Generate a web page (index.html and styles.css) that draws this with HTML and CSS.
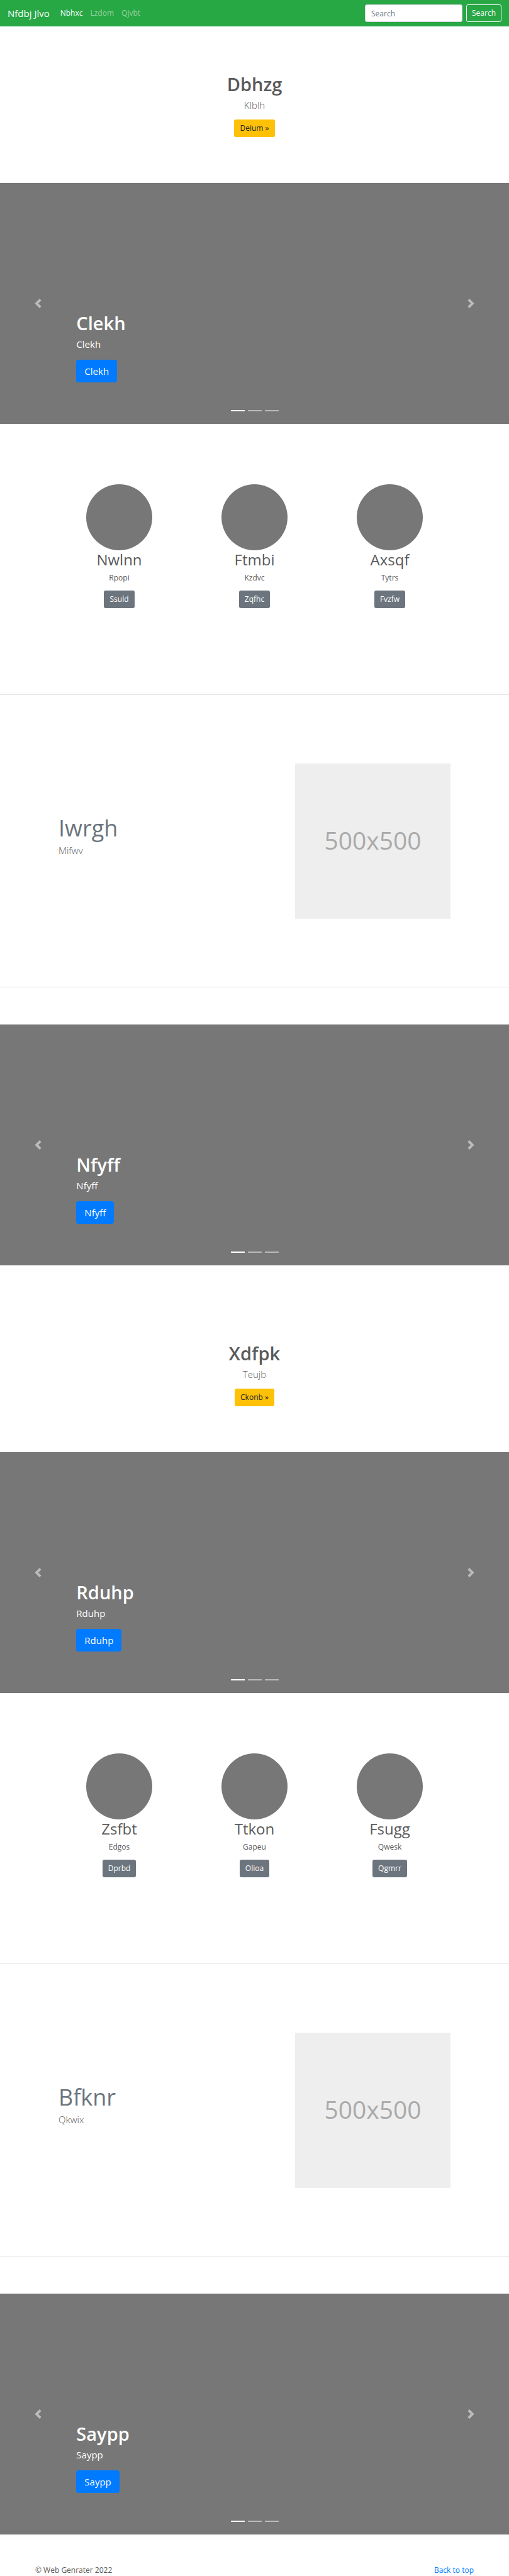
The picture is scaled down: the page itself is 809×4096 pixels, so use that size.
FILE: index.html
```html
<!DOCTYPE html>
<html lang="en">
<head>
<meta charset="utf-8">
<meta name="viewport" content="width=device-width, initial-scale=1">
<title>Nfdbj Jlvo</title>
<link rel="stylesheet" href="styles.css">
</head>
<body>
<header class="navbar" id="top">
  <a class="brand" href="#">Nfdbj Jlvo</a>
  <nav class="nav">
    <a class="nav-link active" href="#">Nbhxc</a>
    <a class="nav-link" href="#">Lzdom</a>
    <a class="nav-link" href="#">Qjvbt</a>
  </nav>
  <form class="search">
    <input class="search-input" type="text" placeholder="Search" aria-label="Search">
    <button class="btn btn-outline" type="submit">Search</button>
  </form>
</header>
<main>
  <section class="hero">
    <h1 class="title">Dbhzg</h1>
    <p class="lead">Klblh</p>
    <a class="btn btn-warning" href="#">Deium »</a>
  </section>

  <section class="carousel" aria-label="Clekh">
    <h2 class="title">Clekh</h2>
    <p class="caption">Clekh</p>
    <a class="btn btn-primary" href="#">Clekh</a>
    <button class="control prev" type="button" aria-label="Previous"><svg class="chevron" viewBox="0 0 8 8"><path d="M5.25 0l-4 4 4 4 1.5-1.5-2.5-2.5 2.5-2.5-1.5-1.5z"/></svg></button>
    <button class="control next" type="button" aria-label="Next"><svg class="chevron" viewBox="0 0 8 8"><path d="M2.75 0l-1.5 1.5 2.5 2.5-2.5 2.5 1.5 1.5 4-4-4-4z"/></svg></button>
    <div class="indicators"><button class="dot current" type="button" aria-label="Slide 1"></button><button class="dot" type="button" aria-label="Slide 2"></button><button class="dot" type="button" aria-label="Slide 3"></button></div>
  </section>

  <section class="marketing">
    <article class="card"><div class="avatar"></div><h2 class="card-title">Nwlnn</h2><p class="card-text">Rpopi</p><a class="btn btn-secondary" href="#">Ssuld</a></article>
    <article class="card"><div class="avatar"></div><h2 class="card-title">Ftmbi</h2><p class="card-text">Kzdvc</p><a class="btn btn-secondary" href="#">Zqfhc</a></article>
    <article class="card"><div class="avatar"></div><h2 class="card-title">Axsqf</h2><p class="card-text">Tytrs</p><a class="btn btn-secondary" href="#">Fvzfw</a></article>
  </section>

  <hr class="divider">
  <section class="featurette">
    <div class="feature-copy">
      <h2 class="feature-title">Iwrgh</h2>
      <p class="lead">Mifwv</p>
    </div>
    <div class="placeholder">500x500</div>
  </section>
  <hr class="divider">

  <section class="carousel after-divider" aria-label="Nfyff">
    <h2 class="title">Nfyff</h2>
    <p class="caption">Nfyff</p>
    <a class="btn btn-primary" href="#">Nfyff</a>
    <button class="control prev" type="button" aria-label="Previous"><svg class="chevron" viewBox="0 0 8 8"><path d="M5.25 0l-4 4 4 4 1.5-1.5-2.5-2.5 2.5-2.5-1.5-1.5z"/></svg></button>
    <button class="control next" type="button" aria-label="Next"><svg class="chevron" viewBox="0 0 8 8"><path d="M2.75 0l-1.5 1.5 2.5 2.5-2.5 2.5 1.5 1.5 4-4-4-4z"/></svg></button>
    <div class="indicators"><button class="dot current" type="button" aria-label="Slide 1"></button><button class="dot" type="button" aria-label="Slide 2"></button><button class="dot" type="button" aria-label="Slide 3"></button></div>
  </section>

  <section class="hero hero-spaced">
    <h2 class="title">Xdfpk</h2>
    <p class="lead">Teujb</p>
    <a class="btn btn-warning" href="#">Ckonb »</a>
  </section>

  <section class="carousel" aria-label="Rduhp">
    <h2 class="title">Rduhp</h2>
    <p class="caption">Rduhp</p>
    <a class="btn btn-primary" href="#">Rduhp</a>
    <button class="control prev" type="button" aria-label="Previous"><svg class="chevron" viewBox="0 0 8 8"><path d="M5.25 0l-4 4 4 4 1.5-1.5-2.5-2.5 2.5-2.5-1.5-1.5z"/></svg></button>
    <button class="control next" type="button" aria-label="Next"><svg class="chevron" viewBox="0 0 8 8"><path d="M2.75 0l-1.5 1.5 2.5 2.5-2.5 2.5 1.5 1.5 4-4-4-4z"/></svg></button>
    <div class="indicators"><button class="dot current" type="button" aria-label="Slide 1"></button><button class="dot" type="button" aria-label="Slide 2"></button><button class="dot" type="button" aria-label="Slide 3"></button></div>
  </section>

  <section class="marketing">
    <article class="card"><div class="avatar"></div><h2 class="card-title">Zsfbt</h2><p class="card-text">Edgos</p><a class="btn btn-secondary" href="#">Dprbd</a></article>
    <article class="card"><div class="avatar"></div><h2 class="card-title">Ttkon</h2><p class="card-text">Gapeu</p><a class="btn btn-secondary" href="#">Olioa</a></article>
    <article class="card"><div class="avatar"></div><h2 class="card-title">Fsugg</h2><p class="card-text">Qwesk</p><a class="btn btn-secondary" href="#">Qgmrr</a></article>
  </section>

  <hr class="divider">
  <section class="featurette">
    <div class="feature-copy">
      <h2 class="feature-title">Bfknr</h2>
      <p class="lead">Qkwix</p>
    </div>
    <div class="placeholder">500x500</div>
  </section>
  <hr class="divider">

  <section class="carousel after-divider" aria-label="Saypp">
    <h2 class="title">Saypp</h2>
    <p class="caption">Saypp</p>
    <a class="btn btn-primary" href="#">Saypp</a>
    <button class="control prev" type="button" aria-label="Previous"><svg class="chevron" viewBox="0 0 8 8"><path d="M5.25 0l-4 4 4 4 1.5-1.5-2.5-2.5 2.5-2.5-1.5-1.5z"/></svg></button>
    <button class="control next" type="button" aria-label="Next"><svg class="chevron" viewBox="0 0 8 8"><path d="M2.75 0l-1.5 1.5 2.5 2.5-2.5 2.5 1.5 1.5 4-4-4-4z"/></svg></button>
    <div class="indicators"><button class="dot current" type="button" aria-label="Slide 1"></button><button class="dot" type="button" aria-label="Slide 2"></button><button class="dot" type="button" aria-label="Slide 3"></button></div>
  </section>
</main>
<footer class="footer">
  <span>© Web Genrater 2022</span>
  <a class="footer-link" href="#top">Back to top</a>
</footer>
</body>
</html>
```
FILE: styles.css
```css
* {
  box-sizing: border-box;
}

body {
  margin: 0;
  background: #fff;
  color: #5a5a5a;
  font-family: "Open Sans", "Noto Sans", sans-serif;
  font-size: 12px;
  line-height: 18px;
}

h1, h2, p {
  margin: 0;
}

a {
  text-decoration: none;
}

.navbar {
  display: flex;
  align-items: center;
  padding: 7px 12px;
  background: #28a745;
}

.brand {
  margin-right: 17px;
  color: #fff;
  font-size: 15px;
  line-height: 22px;
}

.nav {
  display: flex;
  gap: 12px;
}

.nav-link {
  color: rgba(255, 255, 255, 0.5);
}

.nav-link.active {
  color: #fff;
}

.search {
  display: flex;
  gap: 6px;
  margin-left: auto;
}

.search-input {
  width: 155px;
  height: 28px;
  padding: 0 9px;
  border: 1px solid #ced4da;
  border-radius: 3px;
  background: #fff;
  color: #495057;
  font: inherit;
}

.search-input::placeholder {
  color: #6c757d;
  opacity: 1;
}

.btn {
  display: inline-block;
  padding: 4px 8px;
  border: 1px solid transparent;
  border-radius: 3px;
  background: transparent;
  color: #fff;
  font: inherit;
}

.btn-outline {
  border-color: #f8f9fa;
  color: #f8f9fa;
}

.btn-warning {
  background: #ffc107;
  color: #212529;
}

.btn-secondary {
  background: #6c757d;
}

.btn-primary {
  padding: 6px 12px;
  border-radius: 4px;
  background: #007bff;
  font-size: 15px;
  line-height: 22px;
}

.hero {
  display: flex;
  flex-direction: column;
  align-items: center;
  padding: 73px 12px;
}

.hero-spaced {
  padding-top: 121px;
}

.title {
  margin-bottom: 3px;
  font-size: 29px;
  font-weight: 600;
  line-height: 38px;
}

.lead {
  font-size: 15px;
  font-weight: 300;
  line-height: 22px;
}

.hero .lead {
  margin-bottom: 12px;
}

.carousel {
  position: relative;
  display: flex;
  flex-direction: column;
  align-items: flex-start;
  justify-content: flex-end;
  min-height: 383px;
  padding: 0 15% 66px;
  background: #777;
  color: #fff;
}

.after-divider {
  margin-top: 59px;
}

.caption {
  margin-bottom: 14px;
  font-size: 15px;
  line-height: 22px;
}

.control {
  position: absolute;
  top: 0;
  bottom: 0;
  display: flex;
  align-items: center;
  justify-content: center;
  width: 15%;
  padding: 0;
  border: 0;
  background: transparent;
  opacity: 0.5;
}

.prev {
  left: 0;
}

.next {
  right: 0;
}

.chevron {
  width: 15px;
  height: 15px;
  fill: #fff;
}

.indicators {
  position: absolute;
  right: 0;
  bottom: 20px;
  left: 0;
  display: flex;
  justify-content: center;
  gap: 5px;
}

.dot {
  width: 22px;
  height: 2px;
  padding: 0;
  border: 0;
  background: #fff;
  opacity: 0.5;
}

.dot.current {
  opacity: 1;
}

.marketing {
  display: grid;
  grid-template-columns: repeat(3, 1fr);
  max-width: 645px;
  margin: 0 auto;
  padding: 96px 0 137px;
}

.card {
  display: flex;
  flex-direction: column;
  align-items: center;
}

.avatar {
  width: 105px;
  height: 105px;
  border-radius: 50%;
  background: #777;
}

.card-title {
  margin-bottom: 6px;
  font-size: 24px;
  font-weight: 400;
  line-height: 29px;
}

.card-text {
  margin-bottom: 11px;
}

.divider {
  height: 1px;
  margin: 0;
  border: 0;
  background: #e5e5e5;
}

.featurette {
  display: flex;
  align-items: center;
  justify-content: space-between;
  max-width: 623px;
  margin: 0 auto;
  padding: 109px 0 108px;
}

.feature-copy {
  padding-bottom: 17px;
}

.feature-title {
  margin-bottom: 2px;
  color: #6c757d;
  font-size: 36px;
  font-weight: 400;
  line-height: 44px;
}

.placeholder {
  display: flex;
  align-items: center;
  justify-content: center;
  width: 247px;
  aspect-ratio: 1;
  padding-bottom: 3px;
  background: #eee;
  color: #aaa;
  font-size: 39px;
  line-height: 54px;
}

.footer {
  display: flex;
  justify-content: space-between;
  max-width: 719px;
  margin: 0 auto;
  padding: 48px 11px 0;
}

.footer-link {
  color: #007bff;
}
```
